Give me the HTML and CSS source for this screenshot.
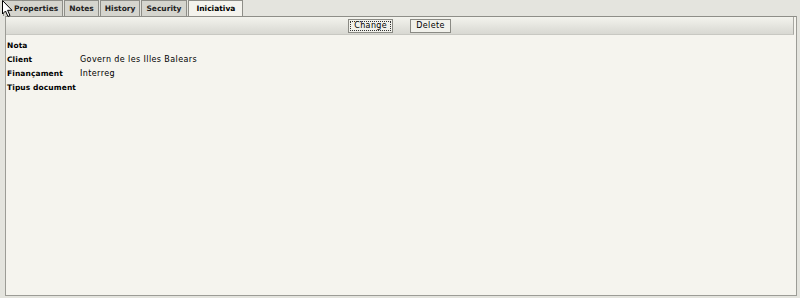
FILE: index.html
```html
<!DOCTYPE html>
<html lang="ca">
<head>
<meta charset="UTF-8">
<title>Iniciativa</title>
<link rel="stylesheet" href="styles.css">
</head>
<body>
<div class="tabs">
  <span class="tab first">Properties</span>
  <span class="tab">Notes</span>
  <span class="tab">History</span>
  <span class="tab wide">Security</span>
  <span class="tab active">Iniciativa</span>
</div>

<div class="panel">
  <div class="toolbar">
    <button class="btn focus">Change</button>
    <button class="btn">Delete</button>
  </div>
  <table class="props">
    <tr><th>Nota</th><td></td></tr>
    <tr><th>Client</th><td>Govern de les Illes Balears</td></tr>
    <tr><th>Finançament</th><td>Interreg</td></tr>
    <tr><th>Tipus document</th><td></td></tr>
  </table>
</div>

<svg class="cursor" width="12" height="18" viewBox="0 0 12 18">
  <path d="M0.5 0.5 L0.5 14 L3.5 11 L6 16.5 L8 15.5 L5.6 10.3 L10 10.3 Z" fill="#fff" stroke="#000" stroke-width="1"/>
</svg>
</body>
</html>
```

FILE: styles.css
```css
body {
  margin: 0;
  background: #e4e4de;
  font-family: "DejaVu Sans", Verdana, sans-serif;
  font-size: 8px;
  color: #000;
  position: relative;
  height: 298px;
  overflow: hidden;
}

.tabs {
  display: flex;
  height: 16px;
  padding-left: 3px;
  box-sizing: border-box;
}

.tab {
  display: flex;
  align-items: center;
  padding: 0 4px;
  height: 16px;
  box-sizing: border-box;
  border: 1px solid #8e8e88;
  border-bottom: 0;
  margin-right: 1px;
  background: #d5d5ce;
  font-weight: bold;
  font-size: 7.5px;
  color: #222;
}

.tab.first {
  padding-left: 10px;
}

.tab.wide {
  padding-right: 5px;
}

.tab.active {
  padding: 0 7px;
  background: #f4f3ed;
  color: #000;
}

.panel {
  margin-left: 5px;
  width: 792px;
  height: 280px;
  box-sizing: border-box;
  border: 1px solid #9c9c96;
  border-top-color: #8e8e88;
  background: #f5f4ee;
}

.toolbar {
  height: 17px;
  display: flex;
  justify-content: center;
  align-items: center;
  gap: 17px;
  margin-right: 2px;
  border-right: 1px solid #a8a8a2;
  border-bottom: 1px solid #c8c8c2;
  background: linear-gradient(#f3f3ed, #d8d8d2);
}

.btn {
  font-family: inherit;
  font-size: 8px;
  letter-spacing: 0.4px;
  color: #000;
  height: 14px;
  padding: 0 5px;
  border: 1px solid #8a8a84;
  background: #f1f1eb;
  margin: 0;
}

.btn.focus {
  outline: 1px dotted #333;
  outline-offset: -3px;
}

.props {
  border-collapse: collapse;
  margin-top: 3px;
  letter-spacing: 0.4px;
}

.props th {
  text-align: left;
  font-weight: bold;
  font-size: 7.5px;
  letter-spacing: 0.1px;
  padding: 0 4px 0 1px;
  height: 14px;
  width: 68px;
  white-space: nowrap;
}

.props td {
  padding: 0;
  height: 14px;
}

.cursor {
  position: absolute;
  left: 2px;
  top: 0;
}
```
